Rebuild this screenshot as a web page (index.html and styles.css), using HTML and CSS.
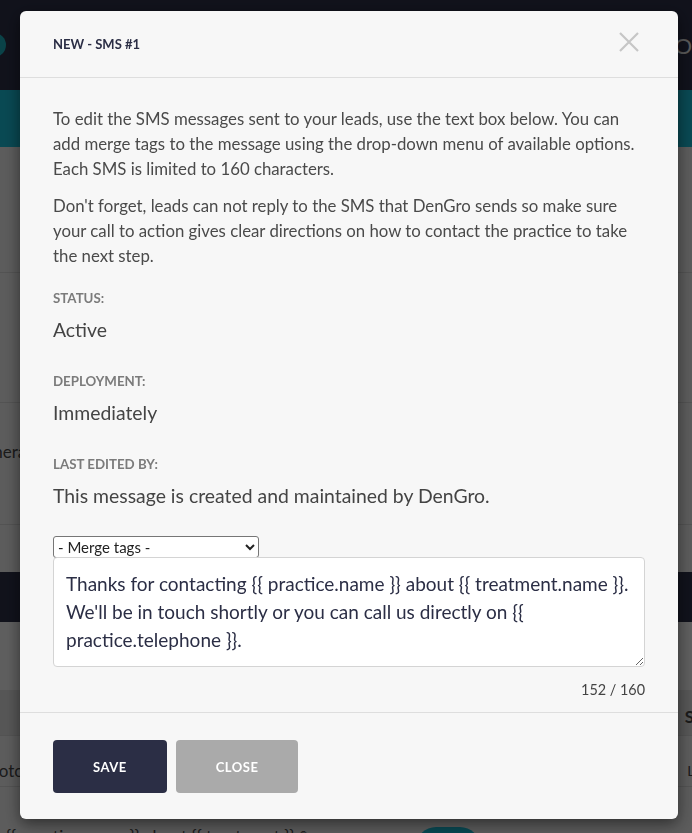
FILE: index.html
```html
<!DOCTYPE html>
<html lang="en">
<head>
  <meta charset="UTF-8" />
  <meta name="viewport" content="width=device-width, initial-scale=1.0" />
  <title>SMS Sequence</title>
  <link rel="stylesheet" href="styles.css">
</head>
<body>
  <!-- page behind the modal -->
  <div class="page">
    <div class="topbar">
      <span class="logo"></span>
      <span class="user">O A</span>
    </div>
    <div class="band"></div>
    <div class="row row-tall"></div>
    <div class="row row-tall"></div>
    <div class="row row-mid"><span class="row-text">Genera</span></div>
    <div class="row row-gap"></div>
    <div class="darkbar"></div>
    <div class="row row-sub"></div>
    <div class="row row-head"><span class="head-text">Status</span></div>
    <div class="row row-item"><span class="row-text">Autotouch</span><span class="row-right">LIVE</span></div>
    <div class="row row-last">
      <span class="row-text">{{ practice.name }} about {{ treatment }} ✎</span>
      <span class="toggle"></span>
    </div>
  </div>

  <div class="overlay"></div>

  <div class="modal">
    <div class="modal-header">
      <h4 class="modal-title">NEW - SMS #1</h4>
      <svg class="close-x" width="20" height="20" viewBox="0 0 20 20">
        <path d="M1 1 L19 19 M19 1 L1 19" stroke="#c6c6c6" stroke-width="2.2" fill="none"/>
      </svg>
    </div>

    <div class="modal-body">
      <p class="intro">To edit the SMS messages sent to your leads, use the text box below. You can add merge tags to the message using the drop-down menu of available options. Each SMS is limited to 160 characters.</p>
      <p class="intro">Don't forget, leads can not reply to the SMS that DenGro sends so make sure your call to action gives clear directions on how to contact the practice to take the next step.</p>

      <div class="field">
        <div class="field-label">STATUS:</div>
        <div class="field-value">Active</div>
      </div>
      <div class="field">
        <div class="field-label">DEPLOYMENT:</div>
        <div class="field-value">Immediately</div>
      </div>
      <div class="field">
        <div class="field-label">LAST EDITED BY:</div>
        <div class="field-value">This message is created and maintained by DenGro.</div>
      </div>

      <select class="merge-select">
        <option>- Merge tags -</option>
        <option>{{ practice.name }}</option>
        <option>{{ practice.telephone }}</option>
        <option>{{ treatment.name }}</option>
      </select>
      <textarea class="sms-text">Thanks for contacting {{ practice.name }} about {{ treatment.name }}. We'll be in touch shortly or you can call us directly on {{ practice.telephone }}.</textarea>
      <div class="counter">152 / 160</div>
    </div>

    <div class="modal-footer">
      <button class="btn btn-save">SAVE</button>
      <button class="btn btn-close">CLOSE</button>
    </div>
  </div>
</body>
</html>
```

FILE: styles.css
```css
body {
  margin: 0;
  font-family: Lato, "Open Sans", sans-serif;
  background: #e6e6e6;
  overflow: hidden;
}

/* background page */
.page {
  width: 692px;
  height: 833px;
  overflow: hidden;
}

.topbar {
  height: 90px;
  background: #2b2e45;
  display: flex;
  align-items: center;
  justify-content: space-between;
}

.logo {
  width: 24px;
  height: 24px;
  margin-left: -18px;
  border-radius: 50%;
  background: #1aa6b3;
}

.user {
  color: #ddd;
  font-size: 22px;
  margin-right: -20px;
}

.band {
  height: 57px;
  background: #18b6cf;
}

.row {
  background: #e6e6e6;
  border-bottom: 1px solid #cfcfcf;
  display: flex;
  align-items: center;
  justify-content: space-between;
  color: #444;
  font-size: 17px;
}

.row-tall { height: 125px; }
.row-tall + .row-tall { height: 129px; }
.row-mid { height: 121px; align-items: flex-start; }
.row-mid .row-text { margin-top: 38px; }
.row-gap { height: 47px; border-bottom: 0; }

.darkbar {
  height: 50px;
  background: #2b2e45;
}

.row-sub { height: 68px; background: #ececec; border-bottom: 0; }
.row-head { height: 45px; background: #d8d8d8; justify-content: flex-end; }
.row-item { height: 50px; }
.row-last { height: 50px; border-bottom: 0; align-items: flex-end; }

.row-text { margin-left: -28px; }
.row-last .row-text { margin-left: 6px; margin-bottom: -10px; }
.head-text { font-weight: bold; font-size: 17px; margin-right: -40px; margin-top: 8px; }
.row-item .row-text { margin-top: 18px; }
.row-right { font-size: 14px; margin-right: -24px; margin-top: 18px; }

.toggle {
  width: 64px;
  height: 40px;
  margin-right: 212px;
  margin-bottom: -30px;
  border-radius: 20px;
  background: #18b6cf;
}

.overlay {
  position: fixed;
  inset: 0;
  background: rgba(0, 0, 0, 0.6);
}

/* modal */
.modal {
  position: fixed;
  left: 20px;
  top: 11px;
  width: 658px;
  height: 808px;
  background: #f7f7f7;
  border-radius: 6px;
  box-shadow: 0 5px 15px rgba(0, 0, 0, 0.5);
  display: flex;
  flex-direction: column;
}

.modal-header {
  height: 67px;
  padding: 0 33px;
  border-bottom: 1px solid #dedede;
  display: flex;
  align-items: center;
  justify-content: space-between;
  box-sizing: border-box;
}

.modal-title {
  margin: 0;
  font-size: 13px;
  font-weight: bold;
  color: #2b2e45;
}

.close-x {
  margin-right: 6px;
  margin-top: -4px;
}

.modal-body {
  padding: 28px 33px 0;
  flex: 1;
}

.intro {
  margin: 0 0 12px;
  font-size: 16.8px;
  line-height: 25px;
  color: #4a4a4a;
}

.field {
  margin-top: 21px;
}

.field + .field {
  margin-top: 30px;
}

.field-label {
  font-size: 13.3px;
  font-weight: bold;
  color: #7b7b7b;
  line-height: 18px;
}

.field-value {
  margin-top: 10px;
  font-size: 19.4px;
  line-height: 25px;
  color: #444;
}

.merge-select {
  display: block;
  margin-top: 28px;
  width: 206px;
  height: 22px;
  font-family: Lato, sans-serif;
  font-size: 15px;
  color: #222;
  background: #fff;
  border: 1px solid #767676;
  border-radius: 3px;
}

.sms-text {
  display: block;
  width: 592px;
  height: 110px;
  margin: -1px 0 0;
  padding: 12px 12px;
  box-sizing: border-box;
  font-family: Lato, sans-serif;
  font-size: 19px;
  line-height: 28px;
  color: #2b2e45;
  background: #fff;
  border: 1px solid #d4d4d4;
  border-radius: 4px;
}

.counter {
  text-align: right;
  font-size: 14.4px;
  color: #444;
  margin-top: 14px;
  width: 592px;
}

.modal-footer {
  height: 107px;
  padding: 27px 33px 0;
  box-sizing: border-box;
  border-top: 1px solid #dedede;
  display: flex;
  gap: 9px;
  align-items: flex-start;
}

.btn {
  height: 53px;
  padding: 0 40px;
  border: 0;
  border-radius: 4px;
  font-family: Lato, sans-serif;
  font-size: 13px;
  font-weight: bold;
  letter-spacing: 0.5px;
  color: #fff;
}

.btn-save { background: #2b2e45; }
.btn-close { background: #aaaaaa; }
```
